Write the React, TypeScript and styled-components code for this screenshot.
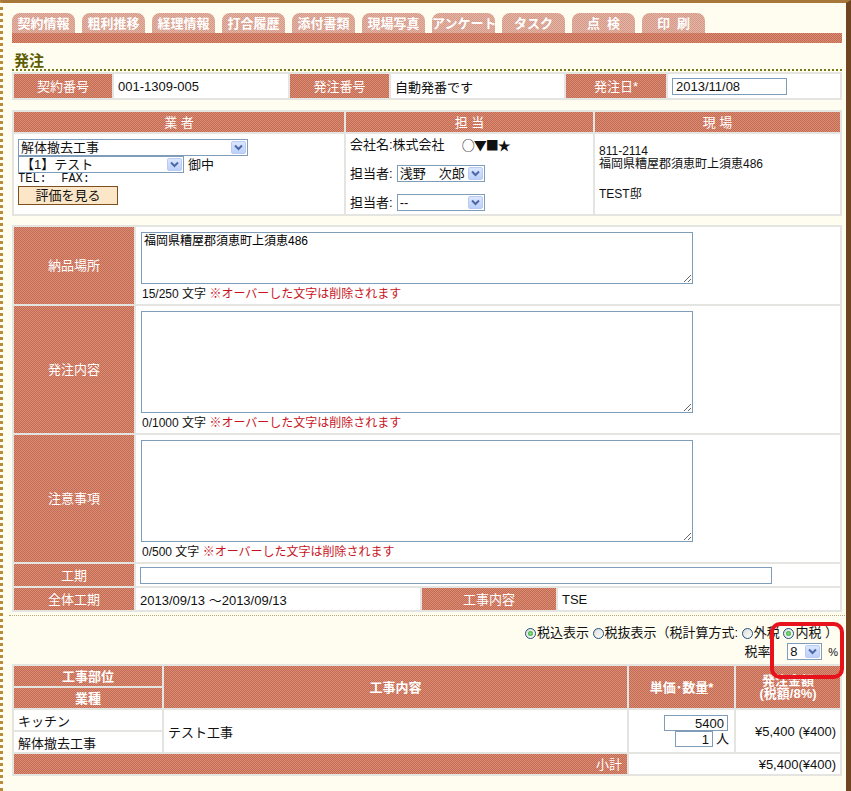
import React from 'react';
import styled, { createGlobalStyle, css } from 'styled-components';

const GlobalStyle = createGlobalStyle`
	html, body { margin: 0; padding: 0; background: #fffdf0; }
	body {
		font-family: "Liberation Sans", "Noto Sans CJK JP", sans-serif;
		font-size: 13px;
		color: #111;
	}
`;

// checkered salmon used by labels and headers
const hatch = css`
	background-color: #ce7b63;
	background-image: conic-gradient(#c46a52 25%, #da8e76 0 50%, #c46a52 0 75%, #da8e76 0);
	background-size: 2px 2px;
`;

const Page = styled.div`
	position: relative;
	width: 851px;
	height: 791px;
	box-sizing: border-box;
	overflow: hidden;
	border-top: 3px solid #a8783a;
	border-left: 3px dotted #b98c3c;
	border-right: 5px solid #6e4520;
	padding: 10px 0 0 9px;
	background: #fffdf0;
`;

const TabRow = styled.div`
	display: flex;
	gap: 7px;
	height: 20px;
`;

const Tab = styled.div`
	width: 63px;
	height: 20px;
	border-radius: 8px 8px 0 0;
	background-color: #dca696;
	background-image: conic-gradient(#d39886 25%, #e5b5a7 0 50%, #d39886 0 75%, #e5b5a7 0);
	background-size: 2px 2px;
	color: #fff;
	font-weight: bold;
	font-size: 13px;
	line-height: 22px;
	text-align: center;
	white-space: pre;
`;

const TabBar = styled.div`
	width: 830px;
	height: 10px;
	${hatch};
`;

const Heading = styled.div`
	width: 830px;
	box-sizing: border-box;
	padding: 10px 0 0 2px;
	line-height: 16px;
	font-size: 15px;
	font-weight: bold;
	color: #5c5c00;
	border-bottom: 2px dotted #7a7a1a;
`;

const Panel = styled.div<{ $cols: string; $mt: number }>`
	display: grid;
	grid-template-columns: ${(p) => p.$cols};
	gap: 2px;
	padding: 2px;
	margin-top: ${(p) => p.$mt}px;
	width: 830px;
	box-sizing: border-box;
	background: #e4e4e0;
`;

const Label = styled.div<{ $h?: number; $col?: string; $row?: string; $bold?: boolean; $end?: boolean }>`
	${hatch};
	color: #fff;
	display: flex;
	align-items: center;
	justify-content: ${(p) => (p.$end ? 'flex-end' : 'center')};
	padding-right: ${(p) => (p.$end ? 5 : 0)}px;
	text-align: center;
	min-height: ${(p) => p.$h ?? 20}px;
	grid-column: ${(p) => p.$col ?? 'auto'};
	grid-row: ${(p) => p.$row ?? 'auto'};
	font-weight: ${(p) => (p.$bold ? 'bold' : 'normal')};
	line-height: 13px;
	white-space: pre;
`;

const Cell = styled.div<{ $col?: string; $row?: string; $align?: string; $h?: number }>`
	background: #fff;
	display: flex;
	align-items: center;
	justify-content: ${(p) => p.$align ?? 'flex-start'};
	padding: 0 4px;
	min-height: ${(p) => p.$h ?? 0}px;
	grid-column: ${(p) => p.$col ?? 'auto'};
	grid-row: ${(p) => p.$row ?? 'auto'};
`;

const TextInput = styled.span<{ $w: number; $h?: number; $right?: boolean }>`
	display: inline-block;
	box-sizing: border-box;
	width: ${(p) => p.$w}px;
	height: ${(p) => p.$h ?? 17}px;
	border: 1px solid #7f9db9;
	background: #fff;
	padding: 0 3px;
	font-size: 13px;
	line-height: 15px;
	text-align: ${(p) => (p.$right ? 'right' : 'left')};
`;

const SelectBox = styled.span<{ $w: number }>`
	display: inline-flex;
	align-items: center;
	justify-content: space-between;
	box-sizing: border-box;
	width: ${(p) => p.$w}px;
	height: 17px;
	border: 1px solid #7f9db9;
	background: #fff;
	padding: 0 1px 0 2px;
	font-size: 13px;
	line-height: 15px;
	white-space: pre;
	vertical-align: middle;
`;

const SelectArrow = styled.span`
	display: flex;
	align-items: center;
	justify-content: center;
	width: 15px;
	height: 13px;
	border-radius: 2px;
	background: linear-gradient(#dce6fd, #bcd0fa);
	border: 1px solid #b9cbf3;
	box-sizing: border-box;
`;

const Select = ({ w, children }: { w: number; children?: React.ReactNode }) => (
	<SelectBox $w={w}>
		<span>{children}</span>
		<SelectArrow>
			<svg width='9' height='7' viewBox='0 0 9 7'>
				<polyline points='1,1.5 4.5,5 8,1.5' fill='none' stroke='#4d68a8' strokeWidth='2' />
			</svg>
		</SelectArrow>
	</SelectBox>
);

const Stack = styled.div<{ $pt: number; $gap?: number }>`
	display: flex;
	flex-direction: column;
	align-items: flex-start;
	align-self: flex-start;
	padding-top: ${(p) => p.$pt}px;
	gap: ${(p) => p.$gap ?? 0}px;
`;

const Line = styled.div`
	display: flex;
	align-items: center;
	gap: 4px;
	line-height: 16px;
	white-space: pre;
`;

const Marks = styled.span`
	font-family: "Noto Sans CJK JP", sans-serif;
	font-size: 13px;
	letter-spacing: -1px;
`;

const Mono = styled.div`
	font-family: "Liberation Mono", monospace;
	font-size: 12px;
	line-height: 13px;
	white-space: pre;
`;

const Button = styled.div`
	width: 100px;
	height: 19px;
	box-sizing: border-box;
	border: 1px solid #7b4f1e;
	background: #fbe7c7;
	text-align: center;
	line-height: 17px;
	font-size: 13px;
`;

const Site = styled.div`
	font-size: 12px;
	line-height: 13px;
	padding-top: 11px;
	align-self: flex-start;
`;

const SiteName = styled.div`
	margin-top: 17px;
`;

const FieldCell = styled.div`
	background: #fff;
	padding: 5px 0 2px 6px;
	grid-column: 2 / 5;
`;

const Area = styled.textarea<{ $h: number }>`
	display: block;
	width: 552px;
	height: ${(p) => p.$h}px;
	box-sizing: border-box;
	border: 1px solid #7f9db9;
	margin: 0 0 2px -1px;
	padding: 1px 2px;
	font-family: "Liberation Sans", "Noto Sans CJK JP", sans-serif;
	font-size: 12px;
	line-height: 14px;
	color: #000;
	background: #fff;
	outline: none;
`;

const Counter = styled.div`
	font-size: 12px;
	line-height: 16px;
	white-space: pre;
`;

const Warn = styled.span`
	color: #c8141e;
`;

const Rule = styled.div`
	width: 836px;
	margin: 3px 0 0 -3px;
	border-top: 1px dotted #b8a878;
`;

const TaxArea = styled.div`
	width: 830px;
	box-sizing: border-box;
	padding: 9px 4px 0 0;
	display: flex;
	flex-direction: column;
	align-items: flex-end;
	gap: 2px;
`;

const TaxLine = styled.div`
	display: flex;
	align-items: center;
	line-height: 16px;
	white-space: pre;
`;

const Radio = styled.span<{ $on?: boolean }>`
	position: relative;
	display: inline-block;
	width: 11px;
	height: 11px;
	box-sizing: border-box;
	border-radius: 50%;
	border: 1px solid #1f4f7c;
	background: linear-gradient(135deg, #dcdcd6, #fff);
	margin-right: 1px;
	&::after {
		content: '';
		display: ${(p) => (p.$on ? 'block' : 'none')};
		position: absolute;
		left: 2px;
		top: 2px;
		width: 5px;
		height: 5px;
		border-radius: 50%;
		background: radial-gradient(#8ee08e, #21a121);
	}
`;

const Percent = styled.span`
	font-size: 11px;
	margin-left: 6px;
`;

const Mark = styled.div`
	position: absolute;
	left: 767px;
	top: 619px;
	width: 74px;
	height: 57px;
	box-sizing: border-box;
	border: 4px solid #e8121c;
	border-radius: 10px;
`;

const QtyCell = styled.div`
	background: #fff;
	grid-column: 3;
	grid-row: 3 / 5;
	display: flex;
	flex-direction: column;
	align-items: flex-end;
	justify-content: center;
	padding-right: 6px;
`;

const tabs = ['契約情報', '粗利推移', '経理情報', '打合履歴', '添付書類', '現場写真', 'アンケート', 'タスク', '点  検', '印  刷'];

const App = () => {
	return (
		<Page>
			<GlobalStyle />
			<TabRow>
				{tabs.map((t) => (
					<Tab key={t}>{t}</Tab>
				))}
			</TabRow>
			<TabBar />
			<Heading>発注</Heading>

			<Panel $cols='98px 174px 99px 173px 100px 172px' $mt={1}>
				<Label $h={24}>契約番号</Label>
				<Cell>001-1309-005</Cell>
				<Label>発注番号</Label>
				<Cell>自動発番です</Cell>
				<Label>発注日*</Label>
				<Cell>
					<TextInput $w={115}>2013/11/08</TextInput>
				</Cell>
			</Panel>

			<Panel $cols='330px 247px 245px' $mt={10}>
				<Label>業 者</Label>
				<Label>担 当</Label>
				<Label>現 場</Label>
				<Cell $h={80}>
					<Stack $pt={5}>
						<Select w={230}>解体撤去工事</Select>
						<Line>
							<Select w={166}>【1】テスト</Select>御中
						</Line>
						<Mono>TEL:  FAX:</Mono>
						<Button>評価を見る</Button>
					</Stack>
				</Cell>
				<Cell>
					<Stack $pt={3} $gap={12}>
						<Line>
							会社名:株式会社　<Marks>○▼■★</Marks>
						</Line>
						<Line>
							担当者:<Select w={88}>浅野　次郎</Select>
						</Line>
						<Line>
							担当者:<Select w={88}>--</Select>
						</Line>
					</Stack>
				</Cell>
				<Cell>
					<Site>
						<div>811-2114</div>
						<div>福岡県糟屋郡須恵町上須恵486</div>
						<SiteName>TEST邸</SiteName>
					</Site>
				</Cell>
			</Panel>

			<Panel $cols='120px 284px 134px 1fr' $mt={9}>
				<Label>納品場所</Label>
				<FieldCell>
					<Area $h={52} defaultValue='福岡県糟屋郡須恵町上須恵486' />
					<Counter>
						15/250 文字 <Warn>※オーバーした文字は削除されます</Warn>
					</Counter>
				</FieldCell>
				<Label>発注内容</Label>
				<FieldCell>
					<Area $h={102} defaultValue='' />
					<Counter>
						0/1000 文字 <Warn>※オーバーした文字は削除されます</Warn>
					</Counter>
				</FieldCell>
				<Label>注意事項</Label>
				<FieldCell>
					<Area $h={102} defaultValue='' />
					<Counter>
						0/500 文字 <Warn>※オーバーした文字は削除されます</Warn>
					</Counter>
				</FieldCell>
				<Label $h={22}>工期</Label>
				<Cell $col='2 / 5'>
					<TextInput $w={632} $h={17} />
				</Cell>
				<Label $h={22}>全体工期</Label>
				<Cell>2013/09/13 ～2013/09/13</Cell>
				<Label>工事内容</Label>
				<Cell>TSE</Cell>
			</Panel>

			<Rule />

			<TaxArea>
				<TaxLine>
					<Radio $on />
					税込表示 <Radio />
					税抜表示（税計算方式: <Radio />
					外税 <Radio $on />
					内税 ）
				</TaxLine>
				<TaxLine>
					税率:　<Select w={35}>8</Select>
					<Percent>%</Percent>
				</TaxLine>
			</TaxArea>

			<Panel $cols='148px 463px 105px 1fr' $mt={4}>
				<Label $bold $col='1' $row='1'>
					工事部位
				</Label>
				<Label $bold $col='1' $row='2'>
					業種
				</Label>
				<Label $bold $col='2' $row='1 / 3'>
					工事内容
				</Label>
				<Label $bold $col='3' $row='1 / 3'>
					単価･数量*
				</Label>
				<Label $bold $col='4' $row='1 / 3'>
					{'発注金額\n(税額/8%)'}
				</Label>
				<Cell $col='1' $row='3' $h={20}>
					キッチン
				</Cell>
				<Cell $col='1' $row='4' $h={20}>
					解体撤去工事
				</Cell>
				<Cell $col='2' $row='3 / 5'>
					テスト工事
				</Cell>
				<QtyCell>
					<TextInput $w={64} $h={16} $right>
						5400
					</TextInput>
					<Line style={{ gap: 3, marginRight: -1 }}>
						<TextInput $w={38} $h={16} $right>
							1
						</TextInput>
						人
					</Line>
				</QtyCell>
				<Cell $col='4' $row='3 / 5' $align='flex-end'>
					¥5,400 (¥400)
				</Cell>
				<Label $col='1 / 3' $row='5' $end>
					小計
				</Label>
				<Cell $col='3 / 5' $row='5' $align='flex-end'>
					¥5,400(¥400)
				</Cell>
			</Panel>

			<Mark />
		</Page>
	);
};

export default App;
